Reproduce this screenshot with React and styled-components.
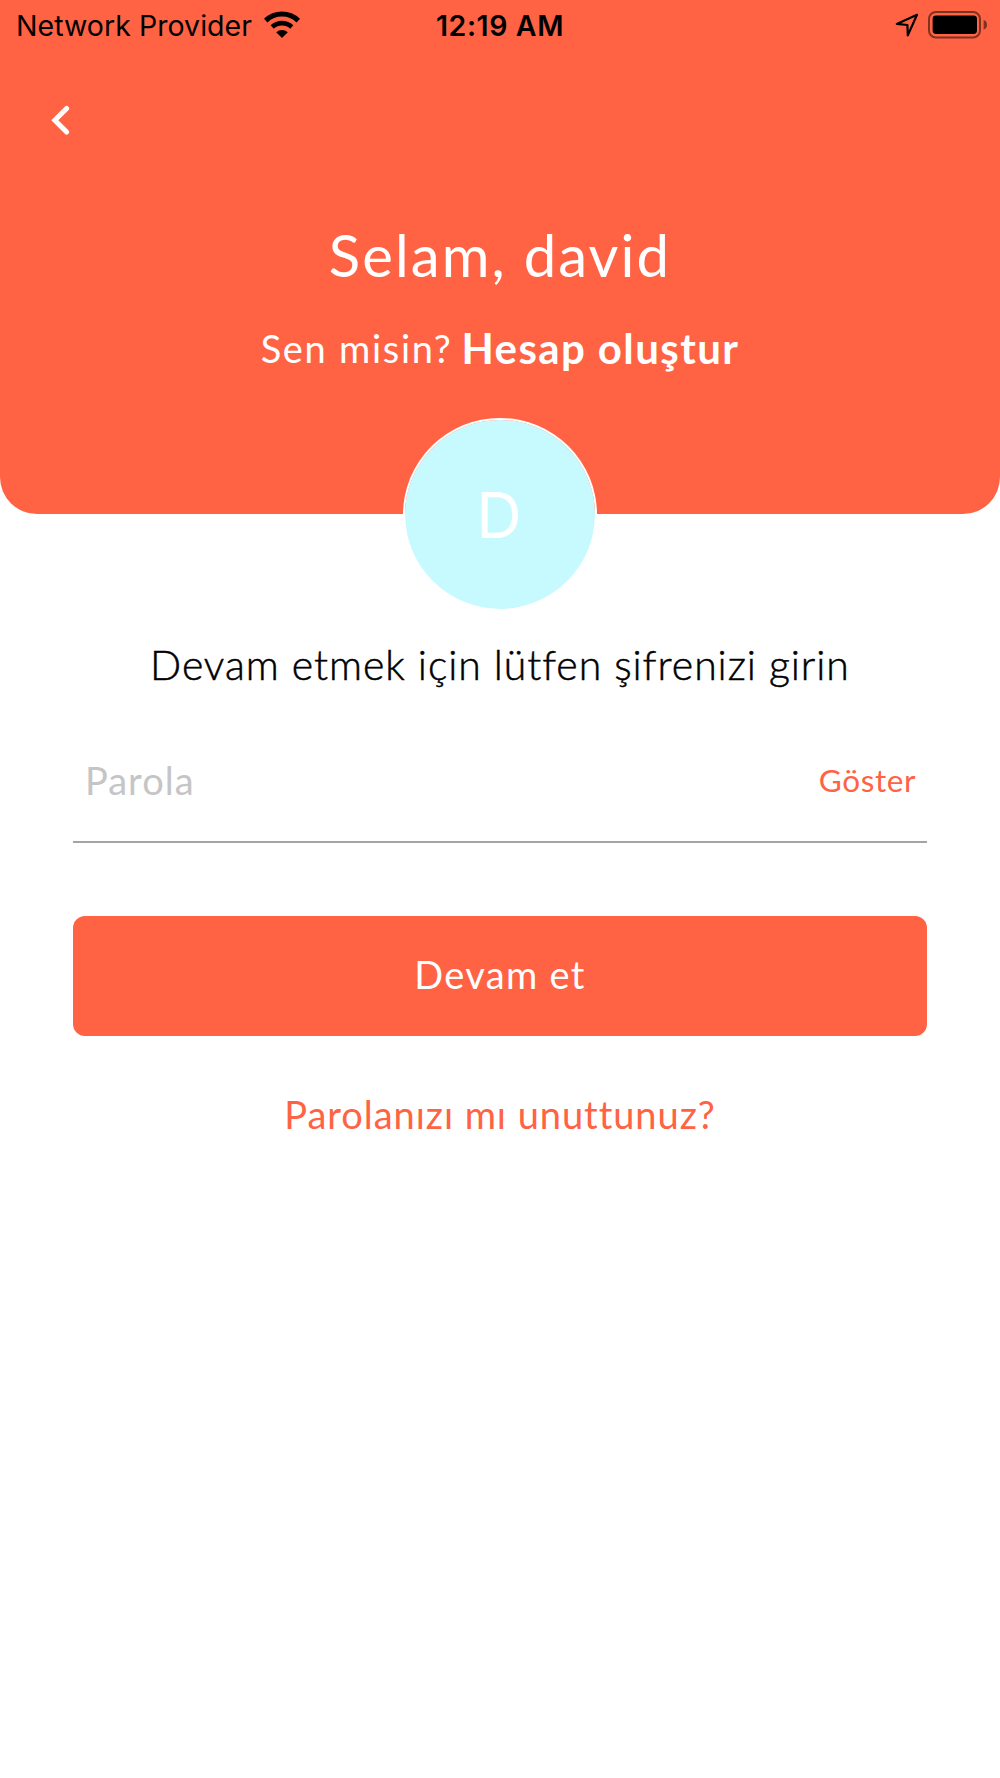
import React from 'react'
import styled, { createGlobalStyle } from 'styled-components'

const GlobalStyle = createGlobalStyle`
    * {
        box-sizing: border-box;
    }
    body {
        margin: 0;
        background: #ffffff;
        font-family: Lato, "Open Sans", sans-serif;
    }
`
const Screen = styled.main`
    width: 1000px;
    height: 1778px;
    display: flex;
    flex-direction: column;
    background: #ffffff;
    overflow: hidden;
`
const Header = styled.header`
    display: flex;
    flex-direction: column;
    height: 514px;
    background: #ff6344;
    border-radius: 0 0 37px 37px;
    color: #ffffff;
`
const StatusBar = styled.div`
    display: grid;
    grid-template-columns: 1fr auto 1fr;
    align-items: center;
    height: 52px;
    padding: 0 13px;
    font-family: Inter, sans-serif;
    font-size: 28.5px;
    line-height: 52px;
    color: #000000;
`
const StatusGroup = styled.div`
    display: flex;
    align-items: center;
    justify-content: ${({ $end }) => ($end ? 'flex-end' : 'flex-start')};
    gap: ${({ $end }) => ($end ? '9px' : '12px')};
    height: 48px;
    margin-bottom: ${({ $end }) => ($end ? '3px' : '4px')};
    padding-left: ${({ $end }) => ($end ? '0' : '3px')};
`
const Carrier = styled.span`
    padding-top: 4px;
    letter-spacing: 0.05px;
`
const Time = styled.span`
    font-weight: 600;
    letter-spacing: 0.6px;
`
const BackButton = styled.button`
    align-self: flex-start;
    display: flex;
    margin: 53px 0 0 50px;
    padding: 0;
    border: 0;
    background: none;
`
const Title = styled.h1`
    margin: 85px 0 0;
    font-weight: 400;
    font-size: 58px;
    line-height: 70px;
    letter-spacing: 2.1px;
    text-align: center;
`
const SubTitle = styled.div`
    display: flex;
    justify-content: center;
    align-items: center;
    gap: 9px;
    margin-top: 33px;
    font-size: 38px;
    line-height: 50px;
    letter-spacing: 1.7px;
`
const CreateLink = styled.a`
    font-weight: 700;
    font-size: 42px;
    letter-spacing: 1.4px;
`
const Avatar = styled.div`
    align-self: center;
    display: flex;
    align-items: center;
    justify-content: center;
    width: 194px;
    height: 193px;
    margin-top: -96px;
    padding-right: 2px;
    border: 2px solid #ffffff;
    border-radius: 50%;
    background: #c7faff;
    background-clip: padding-box;
    font-family: Inter, sans-serif;
    font-size: 63px;
    font-weight: 400;
    line-height: 76px;
    color: #ffffff;
`
const Form = styled.form`
    display: flex;
    flex-direction: column;
    padding: 29px 73px 0;
`
const Prompt = styled.p`
    margin: 0;
    font-weight: 300;
    font-size: 41px;
    line-height: 50px;
    letter-spacing: 0.94px;
    text-align: center;
    white-space: nowrap;
    color: #000000;
    -webkit-text-stroke: 0.5px #000000;
`
const Field = styled.div`
    display: flex;
    align-items: center;
    height: 126px;
    margin-top: 27px;
    padding: 2px 11px 0 12px;
    border-bottom: 2px solid #a4a4a4;
`
const PasswordInput = styled.input`
    flex: 1;
    min-width: 0;
    padding: 0;
    border: 0;
    outline: 0;
    background: none;
    font-family: inherit;
    font-size: 38px;
    line-height: 50px;
    letter-spacing: 1px;
    &::placeholder {
        color: #c5c5c6;
        opacity: 1;
    }
`
const ShowButton = styled.button`
    padding: 0;
    border: 0;
    background: none;
    font-family: inherit;
    font-size: 31.5px;
    letter-spacing: 0.6px;
    color: #ff6344;
`
const SubmitButton = styled.button`
    height: 120px;
    margin-top: 73px;
    padding: 0 0 4px;
    border: 0;
    border-radius: 12px;
    background: #ff6344;
    font-family: inherit;
    font-size: 38px;
    letter-spacing: 1.3px;
    color: #ffffff;
`
const ForgotLink = styled.a`
    align-self: center;
    margin-top: 53px;
    font-size: 38px;
    line-height: 50px;
    letter-spacing: 0.95px;
    color: #ff6344;
`

const WifiIcon = () => (
    <svg width="36" height="27" viewBox="0 0 36 27" fill="none" stroke="#000">
        <path d="M1.7 9.6a23.5 23.5 0 0 1 32.6 0" strokeWidth="5" />
        <path d="M8.2 16a14.2 14.2 0 0 1 19.6 0" strokeWidth="4.6" />
        <path d="M12.2 21.2a8.6 8.6 0 0 1 11.6 0L18 27z" fill="#000" stroke="none" />
    </svg>
)

const LocationIcon = () => (
    <svg width="24" height="24" viewBox="0 0 24 24" fill="none" stroke="#000" strokeWidth="2.2" strokeLinejoin="round">
        <path d="M22 1.8L1.8 10.9l10.6 1.1.4 10.4z" />
    </svg>
)

const BatteryIcon = () => (
    <svg width="59" height="28" viewBox="0 0 59 28">
        <rect x="1" y="1" width="51" height="25.5" rx="7" fill="none" stroke="#000" strokeOpacity="0.5" strokeWidth="2" />
        <rect x="4.6" y="4.6" width="44.4" height="18.4" rx="3.4" fill="#000" />
        <path d="M55.6 8.8c2.6 1 3.4 2.8 3.4 5s-.8 4-3.4 5z" fill="#000" fillOpacity="0.5" />
    </svg>
)

const BackIcon = () => (
    <svg width="20" height="30" viewBox="0 0 20 30" fill="none" stroke="#fff" strokeWidth="5" strokeLinecap="round">
        <path d="M16.6 3.5L4.8 15.2l11.8 11.8" />
    </svg>
)

const App = () => {
    return (
        <>
            <GlobalStyle />
            <Screen>
                <Header>
                    <StatusBar>
                        <StatusGroup>
                            <Carrier>Network Provider</Carrier>
                            <WifiIcon />
                        </StatusGroup>
                        <Time>12:19 AM</Time>
                        <StatusGroup $end>
                            <LocationIcon />
                            <BatteryIcon />
                        </StatusGroup>
                    </StatusBar>
                    <BackButton type="button" aria-label="Geri">
                        <BackIcon />
                    </BackButton>
                    <Title>Selam, david</Title>
                    <SubTitle>
                        <span>Sen misin?</span>
                        <CreateLink>Hesap oluştur</CreateLink>
                    </SubTitle>
                </Header>
                <Avatar>D</Avatar>
                <Form>
                    <Prompt>Devam etmek için lütfen şifrenizi girin</Prompt>
                    <Field>
                        <PasswordInput type="password" placeholder="Parola" />
                        <ShowButton type="button">Göster</ShowButton>
                    </Field>
                    <SubmitButton type="button">Devam et</SubmitButton>
                    <ForgotLink>Parolanızı mı unuttunuz?</ForgotLink>
                </Form>
            </Screen>
        </>
    )
}

export default App
